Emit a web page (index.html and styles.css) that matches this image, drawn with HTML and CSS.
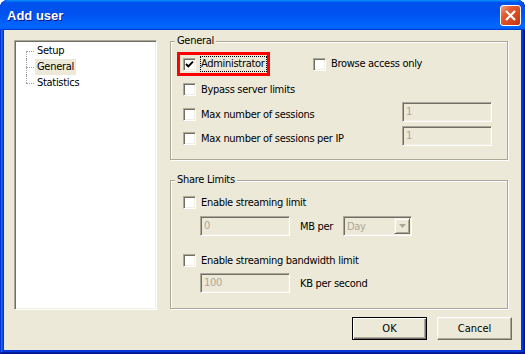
FILE: index.html
```html
<!DOCTYPE html>
<html lang="en">
<head>
    <meta charset="UTF-8">
    <title>Add user</title>
    <link rel="stylesheet" href="styles.css">
</head>
<body>
    <div class="window">
        <!-- Title bar -->
        <div class="titlebar">
            <span class="title">Add user</span>
            <button class="close" aria-label="Close">
                <svg width="19" height="19" viewBox="0 0 19 19">
                    <path d="M5 5 L14 14 M14 5 L5 14" stroke="#fff" stroke-width="2.2" fill="none"/>
                </svg>
            </button>
        </div>

        <div class="client">
            <div class="main">
                <!-- Page tree -->
                <ul class="tree">
                    <li class="first"><span class="item">Setup</span></li>
                    <li><span class="item selected">General</span></li>
                    <li class="last"><span class="item">Statistics</span></li>
                </ul>

                <div class="groups">
                    <fieldset class="group general">
                        <legend>General</legend>
                        <div class="row row-top">
                            <span class="mark">
                                <span class="check">
                                    <svg width="9" height="9" viewBox="0 0 9 9">
                                        <path d="M1 4 L3.3 6.4 L8 1.6" stroke="#000" stroke-width="2" fill="none"/>
                                    </svg>
                                </span>
                                <span class="label focused">Administrator</span>
                            </span>
                            <span class="check browse"></span>
                            <span class="label">Browse access only</span>
                        </div>
                        <div class="row">
                            <span class="check"></span>
                            <span class="label">Bypass server limits</span>
                        </div>
                        <div class="row">
                            <span class="check"></span>
                            <span class="label">Max number of sessions</span>
                            <span class="field field-right">1</span>
                        </div>
                        <div class="row row-last">
                            <span class="check"></span>
                            <span class="label">Max number of sessions per IP</span>
                            <span class="field field-right">1</span>
                        </div>
                    </fieldset>

                    <fieldset class="group limits">
                        <legend>Share Limits</legend>
                        <div class="row">
                            <span class="check"></span>
                            <span class="label">Enable streaming limit</span>
                        </div>
                        <div class="row row-field">
                            <span class="field">0</span>
                            <span class="unit">MB per</span>
                            <span class="combo">
                                <span class="combo-text">Day</span>
                                <span class="combo-btn">
                                    <svg width="7" height="4" viewBox="0 0 7 4"><path d="M0 0 H7 L3.5 4 Z" fill="#aca899"/></svg>
                                </span>
                            </span>
                        </div>
                        <div class="row row-gap">
                            <span class="check"></span>
                            <span class="label">Enable streaming bandwidth limit</span>
                        </div>
                        <div class="row row-field">
                            <span class="field">100</span>
                            <span class="unit">KB per second</span>
                        </div>
                    </fieldset>
                </div>
            </div>

            <div class="buttons">
                <button class="btn default">OK</button>
                <button class="btn">Cancel</button>
            </div>
        </div>
    </div>
</body>
</html>
```

FILE: styles.css
```css
body {
    margin: 0;
    background: #fff;
    font-family: "DejaVu Sans Condensed", "Liberation Sans", sans-serif;
    font-size: 11px;
    letter-spacing: -0.3px;
    color: #000;
}

.window {
    width: 525px;
    height: 354px;
    box-sizing: border-box;
    display: flex;
    flex-direction: column;
    background: #0831d9;
    border-radius: 8px 8px 0 0;
    overflow: hidden;
    box-shadow: inset -1px -1px #00138c, inset 1px 1px #0831d9,
                inset -2px -2px #001ea0, inset 2px 2px #166aee,
                inset -3px -3px #003bda, inset 3px 3px #0855dd;
}

/* Title bar */
.titlebar {
    height: 30px;
    flex: none;
    display: flex;
    align-items: center;
    padding: 0 4px 0 7px;
    border-radius: 8px 8px 0 0;
    background: linear-gradient(180deg, #0997ff, #0053ee 8%, #0050ee 40%, #0066ff 88%, #0066ff 93%, #005bff 95%, #003dd7 96%, #003dd7);
}

.title {
    flex: 1;
    color: #fff;
    font: bold 13px "Liberation Sans", sans-serif;
    letter-spacing: 0;
    text-shadow: 1px 1px #0f1089;
}

.close {
    width: 21px;
    height: 21px;
    padding: 0;
    box-sizing: border-box;
    display: flex;
    align-items: center;
    justify-content: center;
    border: 1px solid #fff;
    border-radius: 3px;
    background: linear-gradient(135deg, #f3a488 0%, #e45c34 30%, #d84a22 60%, #c0360f 100%);
}

/* Client area */
.client {
    flex: 1;
    margin: 0 4px 4px;
    padding: 4px 9px 10px 10px;
    display: flex;
    flex-direction: column;
    gap: 7px;
    background: #ece9d8;
}

.main {
    display: flex;
    align-items: flex-start;
    gap: 13px;
    padding-right: 4px;
}

/* Tree */
.tree {
    width: 143px;
    height: 270px;
    margin: 6px 0 0;
    padding: 2px 0 0;
    list-style: none;
    box-sizing: border-box;
    background: #fff;
    border: 1px solid;
    border-color: #aca899 #fff #fff #aca899;
    box-shadow: inset 1px 1px #716f64, inset -1px -1px #f1efe2;
}

.tree li {
    position: relative;
    height: 16px;
    line-height: 16px;
    padding-left: 20px;
}

.tree li::before {
    content: "";
    position: absolute;
    left: 11px;
    top: 8px;
    width: 8px;
    border-top: 1px dotted #a0a0a0;
}

.tree li::after {
    content: "";
    position: absolute;
    left: 11px;
    top: 0;
    height: 16px;
    border-left: 1px dotted #a0a0a0;
}

.tree li.first::after {
    top: 8px;
    height: 8px;
}

.tree li.last::after {
    height: 8px;
}

.tree .item {
    display: inline-block;
    padding: 0 2px;
}

.tree .selected {
    background: #ece9d8;
}

/* Group boxes */
.groups {
    flex: 1;
    display: flex;
    flex-direction: column;
    gap: 13px;
}

.group {
    margin: 0;
    padding: 3px 0 0;
    min-width: 0;
    box-sizing: border-box;
    border: 1px solid #aca899;
    box-shadow: 1px 1px 0 #fff, inset 1px 1px 0 #fff;
}

.group legend {
    margin-left: 4px;
    padding: 0 2px;
    line-height: 14px;
    background: #ece9d8;
}

.general {
    height: 126px;
}

.limits {
    height: 136px;
}

.row {
    display: flex;
    align-items: center;
    height: 25px;
    padding-left: 12px;
}

.row-top {
    height: 26px;
}

.row-last {
    height: 23px;
}

.row-field {
    height: 22px;
    padding-left: 29px;
}

.row-field:last-child {
    height: 20px;
}

.row-gap {
    margin-top: 11px;
}

/* red highlight round the Administrator option */
.mark {
    width: 93px;
    height: 24px;
    margin-left: -6px;
    padding: 0 1px 0 3px;
    box-sizing: border-box;
    display: flex;
    align-items: center;
    flex: none;
    border: 3px solid #f00;
}

.check {
    width: 13px;
    height: 13px;
    flex: none;
    box-sizing: border-box;
    display: flex;
    align-items: center;
    justify-content: center;
    background: #fff;
    border: 1px solid;
    border-color: #aca899 #fff #fff #aca899;
    box-shadow: inset 1px 1px #716f64, inset -1px -1px #f1efe2;
}

.check.browse {
    margin-left: 43px;
}

.label {
    margin-left: 4px;
    padding: 0 1px 0 0;
    line-height: 14px;
    white-space: nowrap;
    border: 1px dotted transparent;
}

.label.focused {
    border-color: #000;
}

.field {
    width: 90px;
    height: 20px;
    flex: none;
    box-sizing: border-box;
    padding-left: 3px;
    line-height: 18px;
    color: #aca899;
    background: #ece9d8;
    border: 1px solid;
    border-color: #aca899 #fff #fff #aca899;
    box-shadow: inset 1px 1px #716f64, inset -1px -1px #f1efe2;
}

.field-right {
    margin: -6px 15px 0 auto;
}

.unit {
    width: 43px;
    margin-left: 10px;
    white-space: nowrap;
}

.combo {
    width: 69px;
    height: 20px;
    box-sizing: border-box;
    display: flex;
    align-items: center;
    justify-content: space-between;
    padding: 0 1px 0 3px;
    color: #aca899;
    background: #ece9d8;
    border: 1px solid;
    border-color: #aca899 #fff #fff #aca899;
    box-shadow: inset 1px 1px #716f64, inset -1px -1px #f1efe2;
}

.combo-btn {
    width: 16px;
    height: 16px;
    box-sizing: border-box;
    display: flex;
    align-items: center;
    justify-content: center;
    background: #ece9d8;
    border: 1px solid;
    border-color: #f1efe2 #716f64 #716f64 #f1efe2;
    box-shadow: inset 1px 1px #fff, inset -1px -1px #aca899;
}

/* Dialog buttons */
.buttons {
    display: flex;
    justify-content: flex-end;
    gap: 10px;
}

.btn {
    width: 75px;
    height: 23px;
    padding: 0;
    font: inherit;
    color: #000;
    background: #ece9d8;
    border: 1px solid;
    border-color: #fff #716f64 #716f64 #fff;
    box-shadow: inset -1px -1px #aca899, inset 1px 1px #f1efe2;
}

.btn.default {
    border-color: #000;
    box-shadow: inset 1px 1px #fff, inset -1px -1px #716f64, inset -2px -2px #aca899;
}
```
